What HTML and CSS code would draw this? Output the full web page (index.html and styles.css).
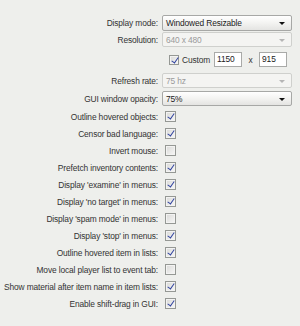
FILE: index.html
```html
<!DOCTYPE html>
<html lang="en">
<head>
    <meta charset="UTF-8">
    <title>Settings</title>
    <link rel="stylesheet" href="styles.css">
</head>
<body>

    <div class="settings">
        <!-- Display options -->
        <div class="row row-display">
            <span class="label">Display mode:</span>
            <div class="combo"><span>Windowed Resizable</span><i class="arrow"></i></div>
        </div>
        <div class="row row-res">
            <span class="label">Resolution:</span>
            <div class="combo disabled"><span>640 x 480</span><i class="arrow"></i></div>
        </div>
        <div class="row row-custom">
            <span class="label"></span>
            <span class="check checked custom-check"></span>
            <span class="custom-text">Custom</span>
            <span class="field">1150</span>
            <span class="times">x</span>
            <span class="field">915</span>
        </div>
        <div class="row row-refresh">
            <span class="label">Refresh rate:</span>
            <div class="combo disabled"><span>75 hz</span><i class="arrow"></i></div>
        </div>
        <div class="row row-opacity">
            <span class="label">GUI window opacity:</span>
            <div class="combo"><span>75%</span><i class="arrow"></i></div>
        </div>

        <!-- Checkbox options -->
        <div class="checks">
            <div class="row"><span class="label">Outline hovered objects:</span><span class="check checked"></span></div>
            <div class="row"><span class="label">Censor bad language:</span><span class="check checked"></span></div>
            <div class="row"><span class="label">Invert mouse:</span><span class="check"></span></div>
            <div class="row"><span class="label">Prefetch inventory contents:</span><span class="check checked"></span></div>
            <div class="row"><span class="label">Display 'examine' in menus:</span><span class="check checked"></span></div>
            <div class="row"><span class="label">Display 'no target' in menus:</span><span class="check checked"></span></div>
            <div class="row"><span class="label">Display 'spam mode' in menus:</span><span class="check"></span></div>
            <div class="row"><span class="label">Display 'stop' in menus:</span><span class="check checked"></span></div>
            <div class="row"><span class="label">Outline hovered item in lists:</span><span class="check checked"></span></div>
            <div class="row"><span class="label">Move local player list to event tab:</span><span class="check"></span></div>
            <div class="row"><span class="label">Show material after item name in item lists:</span><span class="check checked"></span></div>
            <div class="row"><span class="label">Enable shift-drag in GUI:</span><span class="check checked"></span></div>
        </div>
    </div>

</body>
</html>
```

FILE: styles.css
```css
/* Reset margin and padding */
* {
    margin: 0;
    padding: 0;
    box-sizing: border-box;
}

body {
    background-color: #eeefec;
    font-family: 'Liberation Sans', Arial, sans-serif;
    font-size: 8.4px;
    letter-spacing: -0.13px;
    color: #333;
    width: 300px;
    height: 326px;
    overflow: hidden;
}

.settings {
    padding-top: 15px;
}

/* One line: label on the left, control on the right */
.row {
    display: flex;
    align-items: center;
    height: 17px;
}

.label {
    width: 158px;
    text-align: right;
    white-space: nowrap;
    flex-shrink: 0;
}

.row-display { height: 16px; }
.row-res { height: 15px; margin-top: 1px; }
.row-custom { height: 19px; margin-top: 3px; }
.row-refresh { height: 15px; margin-top: 4px; }
.row-opacity { height: 15px; margin-top: 3px; }

.checks {
    margin-top: 2px;
}

/* Drop-down box */
.combo {
    position: relative;
    margin-left: 4px;
    width: 130px;
    height: 100%;
    border: 1px solid #a7a8a6;
    border-radius: 2px;
    background: linear-gradient(#ffffff, #f3f3f1 50%, #e4e4e2);
    display: flex;
    align-items: center;
    padding-left: 3px;
    color: #222;
}

.combo .arrow {
    position: absolute;
    right: 6px;
    top: 50%;
    margin-top: -1px;
    width: 0;
    height: 0;
    border-left: 3px solid transparent;
    border-right: 3px solid transparent;
    border-top: 3px solid #111;
}

.combo.disabled {
    background: #f4f4f2;
    border-color: #cfd0cd;
    color: #9a9a9a;
}

.combo.disabled .arrow {
    border-top-color: #b5b5b5;
}

/* Check box */
.check {
    position: relative;
    margin-left: 7px;
    width: 11px;
    height: 11px;
    border: 1px solid #959894;
    background: linear-gradient(135deg, #d9d9d7, #f7f7f6);
    box-shadow: inset 0 0 0 1px #f3f3f2;
}

.check.checked::after {
    content: "";
    position: absolute;
    left: 3px;
    top: 0;
    width: 3px;
    height: 6px;
    border-right: 1.5px solid #2c3f9e;
    border-bottom: 1.5px solid #2c3f9e;
    transform: rotate(35deg);
}

/* Custom resolution line */
.custom-check {
    margin-left: 11px;
    width: 10px;
    height: 10px;
}

.custom-text {
    margin-left: 3px;
}

.field {
    width: 28px;
    height: 15px;
    background: #fff;
    border: 1px solid #a9aaa8;
    padding-left: 2px;
    line-height: 13px;
    color: #222;
}

.custom-text + .field {
    margin-left: 4px;
}

.times {
    width: 17px;
    text-align: center;
}
```
